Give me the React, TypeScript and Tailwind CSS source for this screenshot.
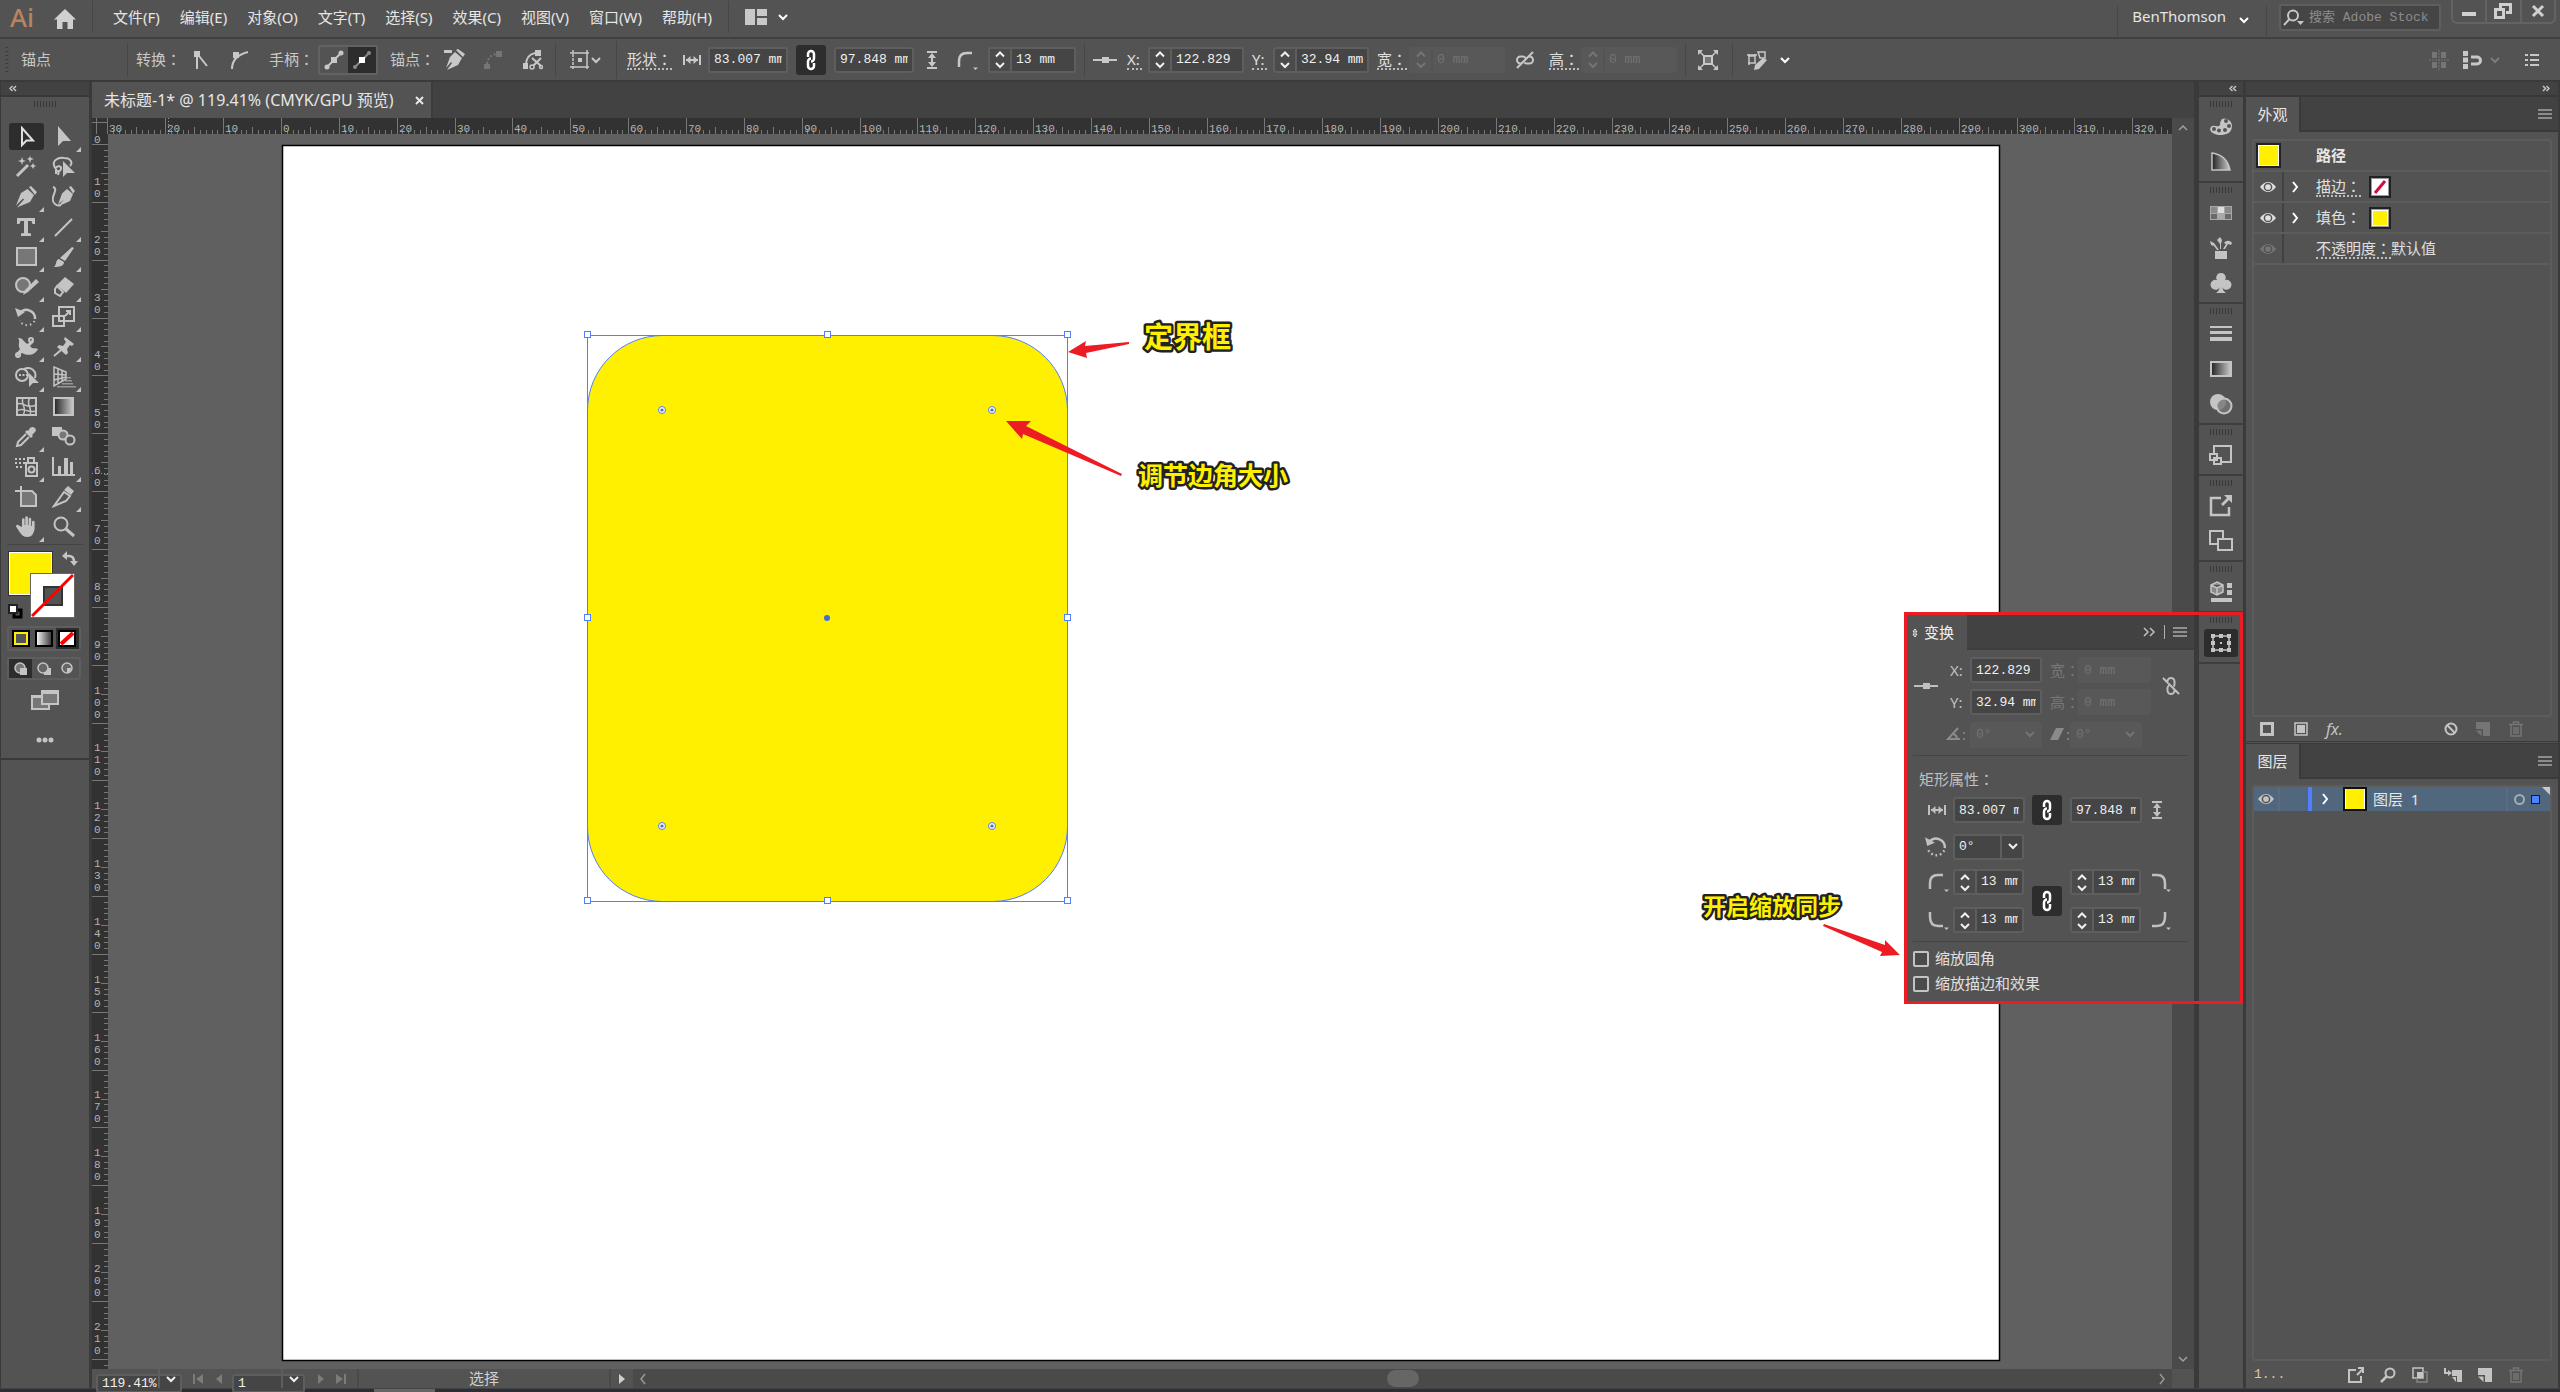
import React from "react";

const SANS = "font-['Noto_Sans','Noto_Sans_CJK_SC',sans-serif]";

type IconProps = { w?: number; h?: number; className?: string; fill?: boolean; sw?: number; children: React.ReactNode };

function Icon({ w = 20, h = 20, className = "", fill = false, sw = 2, children }: IconProps) {
  return (
    <svg
      width={w}
      height={h}
      viewBox={`0 0 ${w} ${h}`}
      className={`shrink-0 ${className}`}
      fill={fill ? "currentColor" : "none"}
      stroke={fill ? "none" : "currentColor"}
      strokeWidth={sw}
      aria-hidden="true"
    >
      {children}
    </svg>
  );
}

const Down = ({ className = "" }: { className?: string }) => (
  <Icon w={12} h={8} className={className}>
    <path d="M2 2l4 4 4-4" />
  </Icon>
);

const LinkIcon = () => (
  <Icon w={14} h={22} sw={2.5}>
    <path d="M4 8V5a3 3 0 0 1 6 0v4.500a3 3 0 0 1-3 3M10 14v3a3 3 0 0 1-6 0v-4.500a3 3 0 0 1 3-3" />
  </Icon>
);

const UnlinkIcon = ({ className = "" }: { className?: string }) => (
  <Icon className={className} sw={2}>
    <path d="M2 2l16 16M6.500 7V5.500a3.500 3.500 0 0 1 7 0V8a3 3 0 0 1-1 2.500M8 9.500a3 3 0 0 0-1.500 2.500v2.500a3.500 3.500 0 0 0 7 0V13" />
  </Icon>
);

const WidthIcon = () => (
  <Icon sw={2}>
    <path d="M2 5v10M18 5v10M4 10h12" />
    <path d="M8.500 6L4 10l4.500 4zM11.500 6l4.500 4-4.500 4z" fill="currentColor" stroke="none" />
  </Icon>
);

const HeightIcon = () => (
  <Icon sw={2}>
    <path d="M5 2h10M5 18h10M10 4v12" />
    <path d="M6 8l4-5 4 5zM6 12l4 5 4-5z" fill="currentColor" stroke="none" />
  </Icon>
);

const RefPoint = () => (
  <Icon w={24} h={20}>
    <path d="M0 10h24" />
    <path d="M9 7h7v6H9z" fill="currentColor" stroke="none" />
  </Icon>
);

function CornerIcon({ turn }: { turn: "tl" | "tr" | "bl" | "br" }) {
  const d = {
    tl: "M3 18V12Q3 4 11 4H16",
    tr: "M3 4H8Q16 4 16 12V18",
    bl: "M3 3V8Q3 17 11 17H16",
    br: "M16 3V8Q16 17 8 17H3",
  }[turn];
  return (
    <Icon w={24} h={22} sw={2.5}>
      <path d={d} />
      <path d="M17 18.500h5l-2.500 2.500z" fill="currentColor" stroke="none" />
    </Icon>
  );
}

const RotateIcon = ({ s = 20 }: { s?: number }) => (
  <svg width={s} height={s} viewBox="0 0 20 20" fill="none" stroke="currentColor" strokeWidth="2.2" aria-hidden="true">
    <path d="M4 6a8 8 0 0 1 14 6" />
    <path d="M0 2l2 8 7-3z" fill="currentColor" stroke="none" />
    <path d="M17.500 14a8 8 0 0 1-14.500-.500" strokeDasharray="1.600 2.400" />
  </svg>
);

const MenuIcon = ({ className = "" }: { className?: string }) => (
  <Icon w={14} h={12} sw={2} className={className}>
    <path d="M0 2h14M0 6h14M0 10h14" />
  </Icon>
);

const EyeIcon = ({ className = "" }: { className?: string }) => (
  <Icon w={16} h={12} className={className}>
    <path d="M0 6Q8-4 16 6Q8 16 0 6z" fill="currentColor" stroke="none" />
    <circle cx="8" cy="6" r="3.600" className="stroke-[#535353]" strokeWidth="1.500" />
  </Icon>
);

const TrashIcon = () => (
  <Icon w={16} h={16} sw={1.500}>
    <path d="M1 3.500h14M5.500 3V1h5v2M3 4v11h10V4M6 6v7M8 6v7M10 6v7" />
  </Icon>
);

const PageIcon = () => (
  <Icon w={14} h={14} fill>
    <path d="M0 0h14v14H7V7H0zM0 8.500h5.500V14z" />
  </Icon>
);

function Grip() {
  return (
    <Icon w={24} h={6} sw={1} className="text-[#383838]">
      <path d="M1.500 0v6M4.500 0v6M7.500 0v6M10.500 0v6M13.500 0v6M16.500 0v6M19.500 0v6M22.500 0v6" />
    </Icon>
  );
}

/* ---------- form controls ---------- */

const field = "border-2 border-[#5e5e5e] bg-[#454545] rounded-[3px]";
const mono = "font-['Liberation_Mono','Noto_Sans_CJK_SC',monospace] text-[13px]";

// Full-width colon, centred in its em box.
const Colon = () => <span className="font-['Noto_Sans_CJK_JP',sans-serif] leading-none" lang="ja">：</span>;

function Field({ label, value, off, className }: { label: string; value: string; off?: boolean; className: string }) {
  return (
    <input
      aria-label={label}
      defaultValue={value}
      disabled={off}
      className={`h-[26px] shrink-0 rounded-[3px] border-2 px-1 outline-none ${mono} ${
        off ? "border-[#585858] bg-[#585858] text-[#747474]" : "border-[#5e5e5e] bg-[#454545] text-[#f0f0f0]"
      } ${className}`}
    />
  );
}

function Spin({ label, value, off, className }: { label: string; value: string; off?: boolean; className: string }) {
  return (
    <div
      className={`flex h-[26px] shrink-0 overflow-hidden rounded-[3px] border-2 ${
        off ? "border-[#585858] bg-[#585858] text-[#747474]" : "border-[#5e5e5e] bg-[#454545] text-[#f0f0f0]"
      } ${className}`}
    >
      <div className={`flex w-[22px] shrink-0 flex-col items-center justify-between border-r-2 ${off ? "border-[#535353]" : "border-[#5e5e5e] bg-[#4b4b4b]"}`}>
        <button aria-label={`${label} +`} disabled={off} className="h-[11px]">
          <Icon w={12} h={8}><path d="M2 6.500l4-4 4 4" /></Icon>
        </button>
        <button aria-label={`${label} -`} disabled={off} className="h-[11px]">
          <Down />
        </button>
      </div>
      <input aria-label={label} defaultValue={value} disabled={off} className={`w-full min-w-0 bg-transparent px-1 outline-none ${mono}`} />
    </div>
  );
}

function Pick({ label, value, off, className, arrow = "" }: { label: string; value: string; off?: boolean; className: string; arrow?: string }) {
  return (
    <div className={`relative shrink-0 ${className}`}>
      <select
        aria-label={label}
        disabled={off}
        className={`h-full w-full appearance-none rounded-[3px] border-2 pl-1 leading-none opacity-100 outline-none ${mono} ${
          off ? "border-[#585858] bg-[#585858] text-[#747474]" : "border-[#5e5e5e] bg-[#454545] text-[#f0f0f0]"
        }`}
      >
        <option>{value}</option>
      </select>
      <span className={`pointer-events-none absolute inset-y-0 right-0 flex w-6 items-center justify-center ${off ? "text-[#747474]" : "text-[#f0f0f0]"} ${arrow}`}>
        <Down />
      </span>
    </div>
  );
}

function IconButton({ label, className = "", children }: { label: string; className?: string; children: React.ReactNode }) {
  return (
    <button aria-label={label} className={`flex shrink-0 items-center justify-center ${className}`}>
      {children}
    </button>
  );
}

const Sep = ({ className = "" }: { className?: string }) => <span className={`h-8 w-px shrink-0 bg-[#464646] ${className}`} />;

const Dotted = ({ children, className = "" }: { children: React.ReactNode; className?: string }) => (
  <button className={`shrink-0 border-b-2 border-dotted border-[#bdbdbd] text-left leading-[18px] whitespace-nowrap text-[#e0e0e0] ${className}`}>{children}</button>
);

/* ---------- top bars ---------- */

const menus = ["文件(F)", "编辑(E)", "对象(O)", "文字(T)", "选择(S)", "效果(C)", "视图(V)", "窗口(W)", "帮助(H)"];

function MenuBar() {
  return (
    <header className="flex h-[39px] shrink-0 border-b-2 border-[#404040] text-[#e6e6e6]">
      <div className="flex items-center pb-[3px]">
        <span className="ml-2.5 w-6 font-['Noto_Sans',sans-serif] text-[26px] leading-8 font-medium text-[#b98360]">Ai</span>
        <IconButton label="主页" className="ml-5 pt-1 text-[#d0d0d0]">
          <Icon w={22} h={20} fill><path d="M11 0l11 10.500h-3V20h-5.500v-7h-5v7H3v-9.500H0z" /></Icon>
        </IconButton>
        <Sep className="ml-4 h-6" />
        <nav className="ml-5 flex gap-5 text-[15px]">
          {menus.map((m) => (
            <button key={m} className="whitespace-nowrap">{m}</button>
          ))}
        </nav>
        <Sep className="ml-4 h-6" />
        <IconButton label="排列文档" className="ml-4 gap-2.5 text-[#c8c8c8]">
          <Icon w={22} h={16} fill><path d="M0 0h10v16H0zM12 0h10v7H12zM12 9h10v7H12z" /></Icon>
          <Down className="text-white" />
        </IconButton>
      </div>
      <div className="ml-auto flex items-start">
        <Sep className="mt-1.5 h-6" />
        <button className="mt-1.5 ml-3.5 flex items-center gap-3 text-[15px] leading-5">
          BenThomson <Down className="mt-2 text-white" />
        </button>
        <Sep className="mt-1.5 ml-4 h-6" />
        <label className={`mt-1 ml-3 flex h-[27px] w-[162px] items-center ${field} text-[#c8c8c8]`}>
          <Icon w={26} h={20}>
            <circle cx="12" cy="7.500" r="5" />
            <path d="M8.500 11L3 17" />
            <path d="M16 13h7l-3.500 4z" fill="currentColor" stroke="none" />
          </Icon>
          <input aria-label="搜索 Adobe Stock" placeholder="搜索 Adobe Stock" className={`w-full min-w-0 bg-transparent pl-0.5 outline-none placeholder:text-[#8c8c8c] ${mono}`} />
        </label>
        <div className="mr-1 ml-2.5 flex h-6 w-[105px] rounded-b-md border-2 border-t-0 border-[#636363] text-[#d0d0d0]">
          <IconButton label="最小化" className="flex-1 border-r-2 border-[#636363]"><Icon w={14} h={14} fill><path d="M0 8h14v4H0z" /></Icon></IconButton>
          <IconButton label="还原" className="flex-1 border-r-2 border-[#636363]"><Icon w={18} h={16} sw={3}><path d="M6.500 5V1.500h10v8H12" /><path d="M1.500 6.500h8v8h-8z" /></Icon></IconButton>
          <IconButton label="关闭" className="flex-1"><Icon w={14} h={14} sw={3}><path d="M2 2l10 10M12 2L2 12" /></Icon></IconButton>
        </div>
      </div>
    </header>
  );
}

function ControlBar() {
  return (
    <div className="flex h-[43px] shrink-0 items-center border-b-2 border-[#3a3a3a] text-[15px] whitespace-nowrap text-[#c8c8c8]">
      <Icon w={4} h={26} sw={3} className="ml-[5px] text-[#3c3c3c]"><path d="M2 0v26" strokeDasharray="1 3" /></Icon>
      <span className="ml-3 w-[30px]">锚点</span>
      <Sep className="ml-[76px]" />
      <span className="ml-2 w-[45px]">转换<Colon /></span>
      <IconButton label="转换为尖角" className="ml-2"><Icon><path d="M5 1h6v6H5z" fill="currentColor" stroke="none" /><path d="M8 6v13M10 6l8 10" /></Icon></IconButton>
      <IconButton label="转换为平滑" className="ml-5"><Icon><path d="M3 19Q3 6 19 2" /><path d="M4 2h6v6H4z" fill="currentColor" stroke="none" /></Icon></IconButton>
      <span className="ml-5 w-[45px]">手柄<Colon /></span>
      <div className="ml-1 flex rounded-[3px] border-2 border-[#626262]">
        <IconButton label="显示手柄" className="h-[26px] w-7"><Icon><path d="M3 17L17 3" /><path d="M7 7h6v6H7z" fill="currentColor" stroke="none" /><circle cx="3" cy="17" r="2.500" fill="currentColor" stroke="none" /><circle cx="17" cy="3" r="2.500" fill="currentColor" stroke="none" /></Icon></IconButton>
        <IconButton label="隐藏手柄" className="h-[26px] w-7 bg-[#2d2d2d]"><Icon className="text-[#8a8a8a]"><path d="M3 17L17 3" /><circle cx="3" cy="17" r="2" fill="currentColor" stroke="none" /><circle cx="17" cy="3" r="2" fill="currentColor" stroke="none" /><path d="M7 7h6v6H7z" fill="#fff" stroke="none" /></Icon></IconButton>
      </div>
      <span className="ml-3 w-[45px]">锚点<Colon /></span>
      <IconButton label="删除锚点" className="ml-2"><Icon w={24} h={22} fill><path d="M1 1h8v3H1zM13 1l2-1 7 5-2 3zM12 3l7 6-4 7-11 5 5-7-1-1-5 6 4-11z" /></Icon></IconButton>
      <IconButton label="连接端点" className="ml-4 text-[#757575]"><Icon><path d="M4 14Q5 5 14 4" strokeDasharray="2 2" /><path d="M1 14h6v5H1zM13 1h6v6h-6z" fill="currentColor" stroke="none" /></Icon></IconButton>
      <IconButton label="剪切路径" className="ml-5"><Icon><path d="M3 15Q3 5 12 3M9 8l9 8M18 8l-8 8" /><path d="M12 0h6v6h-6zM0 13h5v6H0z" fill="currentColor" stroke="none" /><circle cx="9" cy="17" r="2" strokeWidth="1.500" /><circle cx="18" cy="17" r="1.500" strokeWidth="1.500" /></Icon></IconButton>
      <Sep className="ml-3" />
      <IconButton label="对齐" className="ml-3.5"><Icon><path d="M3 3h14v14H3zM0 3h20M0 17h20M3 0v20M17 0v20" strokeWidth="1.500" strokeDasharray="3 1" /><path d="M8 8h4v4H8z" fill="currentColor" stroke="none" /></Icon><Down /></IconButton>
      <Sep className="ml-3.5 h-[38px]" />
      <Dotted className="ml-2.5 w-[45px]">形状<Colon /></Dotted>
      <span className="ml-2.5"><WidthIcon /></span>
      <Field label="形状宽度" value="83.007 mm" className="ml-1.5 w-20" />
      <IconButton label="约束宽度和高度" className="ml-2 h-[30px] w-[30px] rounded-[3px] bg-[#2d2d2d] text-white"><LinkIcon /></IconButton>
      <Field label="形状高度" value="97.848 mm" className="ml-2 w-20" />
      <span className="ml-2"><HeightIcon /></span>
      <IconButton label="圆角类型" className="ml-3.5"><CornerIcon turn="tl" /></IconButton>
      <Spin label="圆角半径" value="13 mm" className="ml-2 w-[88px]" />
      <Sep className="ml-2" />
      <IconButton label="参考点" className="ml-2"><RefPoint /></IconButton>
      <Dotted className="ml-2.5 w-[15px]">X:</Dotted>
      <Spin label="X 坐标" value="122.829" className="ml-1.5 w-24" />
      <Dotted className="ml-2 w-[15px]">Y:</Dotted>
      <Spin label="Y 坐标" value="32.94 mm" className="ml-1.5 w-24" />
      <Dotted className="ml-2 w-[30px]">宽<Colon /></Dotted>
      <Spin label="宽" value="0 mm" off className="ml-0.5 w-24" />
      <IconButton label="链接宽高" className="ml-2.5"><UnlinkIcon className="rotate-90" /></IconButton>
      <Dotted className="ml-3.5 w-[30px]">高<Colon /></Dotted>
      <Spin label="高" value="0 mm" off className="ml-0.5 w-24" />
      <Sep className="ml-2" />
      <IconButton label="隔离" className="ml-3"><Icon><path d="M6 6h8v8H6z" fill="#777" /><path d="M1 1l5 5M19 1l-5 5M1 19l5-5M19 19l-5-5" strokeWidth="1.500" /><path d="M0 0h5L0 5zM20 0h-5l5 5zM0 20h5l-5-5zM20 20h-5l5-5z" fill="currentColor" stroke="none" /></Icon></IconButton>
      <Sep className="ml-3.5" />
      <IconButton label="选择类似" className="ml-3.5 gap-3"><Icon><path d="M2 6h6v7H2zM11 2h7v6h-5zM0 5h10M1 13h8M2 4v11M8 4v9" strokeWidth="1.500" /><path d="M16 8l4 2-8 9-5 1 1-5z" fill="currentColor" stroke="none" /></Icon><Down className="text-white" /></IconButton>
      <div className="mr-[21px] ml-auto flex items-center">
        <IconButton label="对齐网格" className="text-[#757575]"><Icon><path d="M3 2h5v6H3zM12 2h5v6h-5zM3 12h5v6H3zM12 12h5v6h-5z" fill="currentColor" stroke="none" /><path d="M0 10h20M10 0v20" strokeWidth="1" strokeDasharray="2 1" /></Icon></IconButton>
        <IconButton label="贴紧" className="ml-3 gap-1.5"><Icon w={22}><path d="M2 1h5v5H2zM2 7.500h5v5H2zM2 14h5v5H2z" fill="currentColor" stroke="none" /><path d="M10 7h6a3.500 3.500 0 0 1 0 7h-6" strokeWidth="3" /></Icon><Down className="text-[#7c7c7c]" /></IconButton>
        <IconButton label="控制栏菜单" className="ml-6"><Icon w={14} h={14}><path d="M0 2h3M5 2h9M0 7h3M5 7h9M0 12h3M5 12h9" /></Icon></IconButton>
      </div>
    </div>
  );
}

/* ---------- tool box ---------- */

const tools: { name: string; more?: boolean; art: React.ReactNode }[] = [
  { name: "选择工具", art: <path d="M7 2v17l4.500-4.500H18z" /> },
  { name: "直接选择工具", more: true, art: <path d="M6 0v20l5-5h8z" fill="currentColor" stroke="none" /> },
  { name: "魔棒工具", art: <><path d="M2 20L13 9" strokeWidth="3" /><path d="M7 1l1 3 3 1-3 1-1 3-1-3-3-1 3-1zM15 0l1 2 3 1-3 1-1 3-1-3-2-1 2-1zM18 7l1 2 2 1-2 1-1 2-1-2-2-1 2-1z" fill="currentColor" stroke="none" /></> },
  { name: "套索工具", art: <><path d="M4 13C-3 4 8 1 12 2c7 0 9 5 6 8M4 12c1-3 6-2 5 1s-5 3-5 0v5M7 15l-1 4" /><path d="M11 5v16l4-4h8z" fill="currentColor" stroke="none" /></> },
  { name: "钢笔工具", more: true, art: <path d="M14 1l2-1 6 6-2 3zM12.500 3l6.500 6-4 7-13 5.500 7-8-1-1-7 7 5-12.500z" fill="currentColor" stroke="none" /> },
  { name: "曲率工具", art: <><path d="M1 1c6 2-2 9 0 14s5 5 8 4" /><path d="M17 1l2-1 4 5-2 2.500zM15 3l6 5-3 7-12 5.500 6-7-6 5 4-11z" fill="currentColor" stroke="none" /></> },
  { name: "文字工具", more: true, art: <path d="M2 2h18v6h-2.500l-1-3H13v12l3 .500V20H6v-2.500L9 17V5H5.500l-1 3H2z" fill="currentColor" stroke="none" /> },
  { name: "直线段工具", more: true, art: <path d="M3 20L20 3" /> },
  { name: "矩形工具", more: true, art: <path d="M2 2h19v17H2z" fill="#777" /> },
  { name: "画笔工具", more: true, art: <path d="M20 1l2 1-9 13-5-3zM7 13l5 3c0 4-4 5-10 5 3-2 1-7 5-8z" fill="currentColor" stroke="none" /> },
  { name: "Shaper 工具", more: true, art: <><circle cx="8" cy="9" r="7" fill="#777" /><path d="M21 3l3 3-11 10-5 3 2-5z" fill="currentColor" stroke="none" /></> },
  { name: "橡皮擦工具", more: true, art: <><path d="M13 1l9 7-8 9-9-8z" fill="currentColor" stroke="none" /><path d="M5 10l6 6-3 4-5-3v-4z" /></> },
  { name: "旋转工具", more: true, art: <><path d="M5 7a8.500 8.500 0 0 1 15 6" strokeWidth="2.500" /><path d="M0 2l3 9 7-5z" fill="currentColor" stroke="none" /><path d="M19.500 15a8.500 8.500 0 0 1-15-.500" strokeDasharray="1.500 3" /></> },
  { name: "比例缩放工具", more: true, art: <><path d="M7 1h15v14H7zM1 10h11v10H1z" /><path d="M13 10l5-5M14 5h4v4" /></> },
  { name: "宽度工具", more: true, art: <><path d="M2 19L17 5" strokeWidth="1.500" /><path d="M3 2c5-1 6 5 10 6l4-4 2 2-4 4c3 4 5 1 8 3-2 5-9 8-16 4l-4 3-2-2 4-5C2 9 6 5 3 2z" fill="currentColor" stroke="none" /><circle cx="3" cy="19" r="2" /><circle cx="16" cy="4" r="2" /></> },
  { name: "操控变形工具", more: true, art: <><path d="M13 1l9 7-2 2-2-1-3 4 1 4-2 2L5 11l2-2 4 1 3-4-2-3z" fill="currentColor" stroke="none" /><path d="M9 14l-7 6" /></> },
  { name: "形状生成器工具", more: true, art: <><circle cx="7" cy="9" r="6" /><path d="M9 3c7-3 13 2 11 9" /><path d="M4 9h9" strokeDasharray="2 1.500" /><path d="M14 7v14l4-4h6z" fill="currentColor" stroke="none" /></> },
  { name: "透视网格工具", more: true, art: <><path d="M2 1v19l12-7V6zM6 3v14M10 5v10M2 8l12 1M2 14l12-3" strokeWidth="1.500" /><path d="M15 11h4v1.500h-4zM13 14h7v1.500h-7zM10 17h11v1.500H10zM5 20h19v1.500H5z" fill="#999" stroke="none" /></> },
  { name: "网格工具", art: <><path d="M2 2h19v17H2z" /><path d="M2 8c6-3 10 6 19 1M2 15c7-5 10 3 19 0M8 2c-3 6 5 10 0 17M15 2c-5 6 3 10 0 17" strokeWidth="1.500" /></> },
  { name: "渐变工具", art: <rect x="2" y="2" width="19" height="17" fill="url(#tool-grad)" /> },
  { name: "吸管工具", more: true, art: <><path d="M15 2c3-3 8 1 5 4l-3 3 1 1-2 2-6-6 2-2 1 1z" fill="currentColor" stroke="none" /><path d="M11 8L3 16l-1 4 4-1 8-8" /></> },
  { name: "混合工具", art: <><path d="M0 1h10v9H0z" fill="currentColor" stroke="none" /><circle cx="11" cy="9" r="4.500" fill="#777" /><circle cx="18" cy="14" r="4.500" fill="#535353" /></> },
  { name: "符号喷枪工具", more: true, art: <><path d="M11 7h11v13H11zM13 6V2h6v4" /><circle cx="16.500" cy="13.500" r="3" /><path d="M0 3h10M0 7h10M1 11h6" strokeDasharray="2 2" /></> },
  { name: "柱形图工具", more: true, art: <><path d="M1 1v18h22" /><path d="M6 10h3v8H6zM12 2h4v16h-4zM18 6h3v12h-3z" fill="currentColor" stroke="none" /></> },
  { name: "画板工具", art: <><path d="M6 5h11l4 4v11H6z" fill="#777" /><path d="M6 0v8M0 5h8" /></> },
  { name: "切片工具", more: true, art: <><path d="M16 0l6 5-3 4-7-5z" fill="currentColor" stroke="none" /><path d="M12 6l6 4-4 5-12 5z" /></> },
  { name: "抓手工具", more: true, art: <path d="M7 11V3.500a1.300 1.300 0 0 1 2.600 0V9h.7V1.500a1.300 1.300 0 0 1 2.600 0V9h.7V3a1.300 1.300 0 0 1 2.600 0v7h.8V6a1.300 1.300 0 0 1 2.600 0V13c-1 5-3 8-7 8-4 0-6-2-8-5L1 10.500c0-2 2-2 3-1z" fill="currentColor" stroke="none" /> },
  { name: "缩放工具", art: <><circle cx="9" cy="8" r="6.500" /><path d="M14 13l8 7" strokeWidth="3" /></> },
];

function ToolBox() {
  return (
    <aside className="flex w-[92px] shrink-0 flex-col border-r-[3px] border-l border-[#3a3a3a] text-[#c4c4c4]">
      <div className="flex h-[15px] items-center border-b-2 border-[#383838] bg-[#424242] pl-2">
        <Icon w={8} h={7} sw={1.500}><path d="M3.500 1L1 3.500 3.500 6M7 1L4.500 3.500 7 6" /></Icon>
      </div>
      <div className="flex h-[26px] justify-center pt-1"><Grip /></div>
      <svg width="0" height="0" className="absolute" aria-hidden="true">
        <defs>
          <linearGradient id="tool-grad"><stop offset="0" stopColor="#222" /><stop offset="1" stopColor="#ccc" /></linearGradient>
          <linearGradient id="white-grad"><stop offset="0" stopColor="#fff" /><stop offset="1" stopColor="#333" /></linearGradient>
        </defs>
      </svg>
      <div className="ml-2 grid w-[72px] grid-cols-2 gap-x-0.5 gap-y-[3px]">
        {tools.map((t, i) => (
          <button key={t.name} aria-label={t.name} className={`relative flex h-[27px] items-center justify-center rounded-[3px] ${i === 0 ? "bg-[#2d2d2d]" : ""}`}>
            <Icon w={24} h={22} className={i === 0 ? "text-[#e0e0e0]" : ""}>{t.art}</Icon>
            {t.more && <Icon w={5} h={5} fill className="absolute right-0 -bottom-0.5"><path d="M5 0v5H0z" /></Icon>}
          </button>
        ))}
      </div>
      <div className="mx-1.5 mt-1 h-px bg-[#444]" />
      <div className="relative mt-1.5 ml-[7px] h-[68px] w-[72px]">
        <button aria-label="填色" className="absolute top-0 left-0 size-[45px] border border-[#333] bg-[#fff000] shadow-[inset_0_0_0_1px_#fff]" />
        <button aria-label="描边" className="absolute top-[22px] left-[22px] size-[45px] border border-[#666] bg-white">
          <svg viewBox="0 0 43 43" className="size-full" aria-hidden="true">
            <rect x="13" y="13" width="18" height="18" fill="#535353" stroke="#333" strokeWidth="2" />
            <path d="M1 42L42 1" stroke="#f00" strokeWidth="3" />
          </svg>
        </button>
        <button aria-label="互换填色和描边" className="absolute top-0 right-0.5"><Icon w={16} h={16}><path d="M4 5h3q5 0 5 6" strokeWidth="2.500" /><path d="M5 0v9L0 5zM8 10h8l-4 5z" fill="currentColor" stroke="none" /></Icon></button>
        <button aria-label="默认填色和描边" className="absolute bottom-0 left-0"><Icon w={15} h={15}><path d="M6 6h7v7H6z" stroke="#000" strokeWidth="3" /><path d="M1 1h8v8H1z" fill="#fff" stroke="#222" /></Icon></button>
      </div>
      <div className="mt-[7px] ml-1.5 flex w-[74px] rounded-[3px] border-2 border-[#5e5e5e]">
        <IconButton label="颜色" className="h-[21px] flex-1"><Icon w={18} h={17}><rect x="1" y="1" width="16" height="15" fill="#555" stroke="#000" /><rect x="3" y="3" width="12" height="11" stroke="#fff000" /></Icon></IconButton>
        <IconButton label="渐变" className="h-[21px] flex-1"><Icon w={18} h={17}><rect x="1" y="1" width="16" height="15" fill="url(#white-grad)" stroke="#000" /></Icon></IconButton>
        <IconButton label="无" className="h-[21px] flex-1 bg-[#2d2d2d]"><Icon w={18} h={17}><rect x="1" y="1" width="16" height="15" fill="#fff" stroke="#000" /><path d="M3 14L15 3" stroke="#f00" strokeWidth="4" /></Icon></IconButton>
      </div>
      <div className="mt-1.5 ml-1.5 flex w-[74px] rounded-[3px] border-2 border-[#5e5e5e]">
        <IconButton label="正常绘图" className="h-[19px] flex-1 bg-[#2d2d2d]"><Icon w={16} h={14} sw={1.500}><circle cx="7" cy="6" r="5" fill="#777" /><path d="M7 6h7v7H7z" fill="currentColor" stroke="none" /></Icon></IconButton>
        <IconButton label="背面绘图" className="h-[19px] flex-1"><Icon w={16} h={14} sw={1.500}><path d="M8 6h7v7H8z" fill="currentColor" stroke="none" /><circle cx="7" cy="6" r="5" fill="#666" /></Icon></IconButton>
        <IconButton label="内部绘图" className="h-[19px] flex-1"><Icon w={16} h={14} sw={1.500}><circle cx="8" cy="6" r="5" fill="#666" /><path d="M8 6h4v1q-1 4-4 4z" fill="currentColor" stroke="none" /></Icon></IconButton>
      </div>
      <IconButton label="更改屏幕模式" className="mt-2.5"><Icon w={28} h={20}><path d="M11 6H1v13h17v-5" fill="#777" /><path d="M11 1h16v13H11z" fill="#777" /><path d="M11 3h16M1 7h10" /></Icon></IconButton>
      <IconButton label="编辑工具栏" className="mt-[27px]"><Icon w={18} h={6} fill><circle cx="3" cy="3" r="2.500" /><circle cx="9" cy="3" r="2.500" /><circle cx="15" cy="3" r="2.500" /></Icon></IconButton>
      <div className="mt-[15px] h-0.5 bg-[#3a3a3a]" />
    </aside>
  );
}

/* ---------- rulers and canvas ---------- */

const PX_PER_MM = 5.785;

function HorizontalRuler() {
  const origin = 174;
  const ticks = Array.from({ length: 357 }, (_, i) => i - 30);
  return (
    <svg className="h-4 min-w-0 flex-1 bg-[#323232]" aria-hidden="true">
      <path d={ticks.map((t) => `M${Math.round(origin + t * PX_PER_MM) - 0.5} 16v-${t % 10 === 0 ? 16 : t % 5 === 0 ? 7 : 4}`).join("")} stroke="#777" strokeWidth="1" />
      <path d="M60.500 0v16" stroke="#999" strokeDasharray="1 2" />
      {ticks.filter((t) => t % 10 === 0).map((t) => (
        <text key={t} x={Math.round(origin + t * PX_PER_MM) + 1} y="14" fill="#b4b4b4" className="font-['Liberation_Mono',monospace] text-[11px]">{Math.abs(t)}</text>
      ))}
    </svg>
  );
}

function VerticalRuler() {
  const origin = 11;
  const ticks = Array.from({ length: 214 }, (_, i) => i);
  return (
    <svg className="w-4 shrink-0 bg-[#323232]" aria-hidden="true">
      <path d={ticks.map((t) => `M16 ${Math.round(origin + t * PX_PER_MM) - 0.5}h-${t % 10 === 0 ? 16 : t % 5 === 0 ? 7 : 4}`).join("")} stroke="#777" strokeWidth="1" />
      <path d="M0 339.500h16" stroke="#999" strokeDasharray="1 2" />
      {ticks.filter((t) => t % 10 === 0).map((t) =>
        String(t).split("").reverse().map((d, k) => (
          <text key={`${t}-${k}`} x="2" y={Math.max(9, Math.round(origin + t * PX_PER_MM) - 6 - k * 12)} fill="#b4b4b4" className="font-['Liberation_Mono',monospace] text-[11px]">{d}</text>
        ))
      )}
    </svg>
  );
}

const handles = [[588, 335], [828, 335], [1068, 335], [588, 618], [1068, 618], [588, 901], [828, 901], [1068, 901]];
const cornerDots = [[662, 410], [992, 410], [662, 826], [992, 826]];

function Canvas() {
  return (
    <div className="min-w-0 flex-1 overflow-hidden bg-[#606060]">
      <svg className="block size-full font-['Noto_Sans_CJK_SC',sans-serif] font-bold">
        <g transform="translate(-108 -134)">
          <rect x="282.500" y="145.500" width="1717" height="1215" fill="#fff" stroke="#000" strokeWidth="1.500" />
          <rect x="587.500" y="335.500" width="480" height="566" rx="75" fill="#fff000" stroke="#4f80ff" />
          <rect x="587.500" y="335.500" width="480" height="566" fill="none" stroke="#4f80ff" />
          {handles.map(([x, y]) => <rect key={`${x}-${y}`} x={x - 3.5} y={y - 3.5} width="6" height="6" fill="#fff" stroke="#4f80ff" />)}
          {cornerDots.map(([x, y]) => (
            <g key={`${x}-${y}`}>
              <circle cx={x} cy={y} r="3.500" fill="#fffbd0" stroke="#4f80ff" />
              <circle cx={x} cy={y} r="1.600" fill="#3f70e8" />
            </g>
          ))}
          <circle cx="827" cy="618" r="3" fill="#3f6fd0" />
          <g fill="#ed1c24">
            <path d="M1068 352L1086 341 1085 346 1129 342 1129 344 1086 353 1087 358z" />
            <path d="M1006 421H1031L1026 426 1122 474 1121 476 1023 434 1022 439z" />
            <path d="M1900 955L1885 940 1885 945 1824 924 1823 926 1882 952 1880 956z" />
          </g>
          <g fill="#fff000" stroke="#222" strokeWidth="5" strokeLinejoin="round" className="[paint-order:stroke]">
            <text x="1144" y="348" className="text-[29px]">定界框</text>
            <text x="1138" y="485" className="text-[25px]">调节边角大小</text>
            <text x="1703" y="915" className="text-[23px]">开启缩放同步</text>
          </g>
        </g>
      </svg>
    </div>
  );
}

function StatusBar() {
  return (
    <footer className="flex h-[19px] shrink-0 items-center text-[#7c7c7c]">
      <Pick label="缩放" value="119.41%" className="ml-1 h-[19px] w-[86px]" arrow="border-l-2 border-[#5e5e5e]" />
      <IconButton label="首项" className="ml-2.5"><Icon w={12} h={10} fill><path d="M1 0h2v10H1zM11 0v10L4 5z" /></Icon></IconButton>
      <IconButton label="上一项" className="ml-2.5"><Icon w={12} h={10} fill><path d="M8 0v10L2 5z" /></Icon></IconButton>
      <Pick label="画板" value="1" className="ml-1.5 h-[19px] w-[73px]" arrow="border-l-2 border-[#5e5e5e]" />
      <IconButton label="下一项" className="ml-2.5"><Icon w={12} h={10} fill><path d="M3 0v10L9 5z" /></Icon></IconButton>
      <IconButton label="末项" className="ml-2"><Icon w={12} h={10} fill><path d="M9 0h2v10H9zM1 0v10L8 5z" /></Icon></IconButton>
      <div className="ml-2.5 w-[254px] border-x-2 border-[#4a4a4a] text-center text-[15px] leading-[19px] text-[#d0d0d0]">选择</div>
      <IconButton label="状态菜单" className="mx-1.5 text-[#d0d0d0]"><Icon w={10} h={10} fill><path d="M2 0v10l6-5z" /></Icon></IconButton>
      <div className="flex h-full flex-1 items-center justify-between bg-[#4a4a4a] pr-1.5 pl-1.5 text-[#999]">
        <Icon w={8} h={12} sw={1.500}><path d="M6 1L2 6l4 5" /></Icon>
        <span className="h-[17px] w-8 rounded-full bg-[#666]" />
        <Icon w={8} h={12} sw={1.500}><path d="M2 1l4 5-4 5" /></Icon>
      </div>
      <span className="w-[22px] shrink-0" />
    </footer>
  );
}

function Document() {
  return (
    <main className="flex min-w-0 flex-1 flex-col">
      <div className="flex h-9 shrink-0 bg-[#424242]">
        <div className={`flex w-[341px] items-center justify-between border-r-2 border-[#3c3c3c] bg-[#535353] pr-1 pl-3 text-[#e6e6e6] ${SANS}`}>
          <span className="text-base whitespace-nowrap">未标题-1* @ 119.41% (CMYK/GPU 预览)</span>
          <button aria-label="关闭文档" className="flex w-4 justify-center"><Icon w={9} h={9}><path d="M1 1l7 7M8 1L1 8" /></Icon></button>
        </div>
      </div>
      <div className="flex min-h-0 flex-1">
        <div className="flex min-w-0 flex-1 flex-col">
          <div className="flex h-4 shrink-0">
            <Icon w={16} h={16} sw={1} className="bg-[#323232] text-[#777]"><path d="M4.500 0v16M0 4.500h16M15.500 0v16" /></Icon>
            <HorizontalRuler />
          </div>
          <div className="flex min-h-0 flex-1">
            <VerticalRuler />
            <Canvas />
          </div>
        </div>
        <div className="flex w-[22px] shrink-0 flex-col items-center justify-between bg-[#4a4a4a] py-1.5 text-[#a0a0a0]">
          <Icon w={12} h={8} sw={1.500}><path d="M2 6l4-4 4 4" /></Icon>
          <Icon w={12} h={8} sw={1.500}><path d="M2 2l4 4 4-4" /></Icon>
        </div>
      </div>
      <StatusBar />
    </main>
  );
}

/* ---------- icon dock ---------- */

const dock: { name: string; art: React.ReactNode }[][] = [
  [
    { name: "颜色", art: <path fillRule="evenodd" d="M12 5C13 0 23 3 23 10s-6 9-12 9S-1 15 2 11c2-3 7 1 9-2 1-2-1-2 1-4zM15 5a2 2 0 1 0 4 0 2 2 0 0 0-4 0zM18 10a2 2 0 1 0 4 0 2 2 0 0 0-4 0zM14 14a2 2 0 1 0 4 0 2 2 0 0 0-4 0zM8 14.500a2 2 0 1 0 4 0 2 2 0 0 0-4 0zM3 13a2 2 0 1 0 4 0 2 2 0 0 0-4 0z" fill="currentColor" stroke="none" /> },
    { name: "颜色参考", art: <path d="M3 2q15 2 18 17H3z" fill="url(#tool-grad)" strokeWidth="1.500" /> },
  ],
  [
    { name: "色板", art: <><path d="M1 4h22v14H1z" fill="#a8a8a8" stroke="none" /><path d="M2 5h6v6H2zM16 5h6v6h-6z" fill="#8a8a8a" stroke="none" /><path d="M9 5h6v6H9z" fill="#ddd" stroke="none" /><path d="M2 12h6v5H2zM16 12h6v5h-6z" fill="#6a6a6a" stroke="none" /></> },
    { name: "画笔", art: <path d="M6 14h12v8H6zM8 13L5 9 2 8 1 4l4 2 5 7zM11 12V7L8 3l3-3 2 3-1 4v5zM14 12l3-5-2-1c2-3 6-3 8 0l-1 2-3-1-3 5z" fill="currentColor" stroke="none" /> },
    { name: "符号", art: <path d="M12 1a4.500 4.500 0 0 1 4 7 5 5 0 1 1-3 7q1 4 4 6H7q3-2 4-6a5 5 0 1 1-3-7 4.500 4.500 0 0 1 4-7z" fill="currentColor" stroke="none" /> },
  ],
  [
    { name: "描边", art: <path d="M1 3h22v2H1zM1 8h22v3H1zM1 14h22v4H1z" fill="currentColor" stroke="none" /> },
    { name: "渐变", art: <rect x="2" y="4" width="20" height="14" fill="url(#tool-grad)" /> },
    { name: "透明度", art: <><circle cx="9" cy="9" r="8" fill="currentColor" stroke="none" /><circle cx="15" cy="13" r="7.500" fill="#777" fillOpacity=".8" /></> },
  ],
  [{ name: "变换对象", art: <><path d="M5 9V2h17v16H12" /><path d="M1 10h7v6H1zM5 14h7v6H5z" /></> }],
  [
    { name: "资源导出", art: <><path d="M12 3H2v17h18V12" strokeWidth="2.500" /><path d="M15 0h8v8l-3-3-6 6-2-2 6-6z" fill="currentColor" stroke="none" /></> },
    { name: "画板", art: <><path d="M8 14H1V1h13v7" /><path d="M9 9h14v11H9z" /></> },
  ],
  [{ name: "库", art: <><path d="M8 1l6 3v7l-6 3-6-3V4zM2 4l6 3 6-3M8 7v7" strokeWidth="1.500" fill="#888" /><path d="M18 2h5v5h-5zM18 9h5v5h-5zM2 17h21v4H2z" fill="currentColor" stroke="none" /></> }],
  [{ name: "变换", art: <><path d="M4 4h16v14H4z" strokeWidth="1.500" /><path d="M2 2h4v4H2zM10 2h4v4h-4zM18 2h4v4h-4zM2 9h4v4H2zM18 9h4v4h-4zM2 16h4v4H2zM10 16h4v4h-4zM18 16h4v4h-4zM11 10h2v2h-2z" fill="currentColor" stroke="none" /></> }],
];

function Dock() {
  return (
    <aside className="flex w-[50px] shrink-0 flex-col border-x-[3px] border-[#3a3a3a] text-[#c4c4c4]">
      <div className="flex h-[15px] items-center justify-end border-b-2 border-[#383838] bg-[#424242] pr-1.5">
        <Icon w={8} h={7} sw={1.500}><path d="M3.500 1L1 3.500 3.500 6M7 1L4.500 3.500 7 6" /></Icon>
      </div>
      {dock.map((group) => (
        <div key={group[0].name} className="flex flex-col items-center border-b-2 border-[#3e3e3e] pt-1 pb-0.5">
          <Grip />
          <div className="mt-0.5 flex flex-col">
            {group.map((d) => (
              <button key={d.name} aria-label={d.name} className="flex h-[35px] w-9 items-center justify-center">
                <span className={`flex h-7 w-[34px] items-center justify-center rounded-[3px] ${d.name === "变换" ? "bg-[#2d2d2d]" : ""}`}>
                  <Icon w={24} h={22}>{d.art}</Icon>
                </span>
              </button>
            ))}
          </div>
        </div>
      ))}
    </aside>
  );
}

/* ---------- transform panel ---------- */

const darkLink = "size-[30px] rounded-[3px] bg-[#2d2d2d] text-white";

function TransformPanel() {
  return (
    <section aria-label="变换" className="absolute top-[530px] right-[317px] w-[339px] border-[3px] border-[#ed1c24]">
      <div className="flex w-[289px] flex-col border-r-2 border-[#3a3a3a] bg-[#535353] pb-[5px] text-[15px] whitespace-nowrap text-[#c0c0c0]">
        <div className="flex h-[35px] border-b-2 border-[#3e3e3e] bg-[#424242]">
          <h2 className="-mb-0.5 flex w-[60px] items-center gap-1.5 bg-[#535353] pl-[5px] text-[#f0f0f0]">
            <Icon w={6} h={10} sw={1}><path d="M1 4l2-3 2 3zM1 6l2 3 2-3z" /></Icon>变换
          </h2>
          <div className="mr-[7px] ml-auto flex items-center gap-2">
            <IconButton label="折叠"><Icon w={13} h={10} sw={1.500}><path d="M1 1l4 4-4 4M7 1l4 4-4 4" /></Icon></IconButton>
            <span className="h-3.5 w-px bg-[#b0b0b0]" />
            <MenuIcon className="text-[#909090]" />
          </div>
        </div>
        <div className="mt-[7px] flex items-center pl-[7px]">
          <IconButton label="参考点" className="-mt-8"><RefPoint /></IconButton>
          <div className="ml-3 grid grid-cols-[20px_80px_28px_73px] items-center gap-y-1.5">
            <span>X:</span><Field label="X" value="122.829" className="w-[72px]" />
            <span className="text-[#777]">宽<Colon /></span><Field label="宽度" value="0 mm" off className="w-[73px]" />
            <span>Y:</span><Field label="Y" value="32.94 mm" className="w-[72px]" />
            <span className="text-[#777]">高<Colon /></span><Field label="高度" value="0 mm" off className="w-[73px]" />
            <span className="-ml-1 flex items-center text-[#8a8a8a]"><Icon w={16} h={14}><path d="M12 1L2 12h12M7 7q4 1 4 5" /></Icon>:</span>
            <Pick label="旋转角度" value="0°" off className="h-[26px] w-[72px]" />
            <span className="flex items-center text-[#8a8a8a]"><Icon w={16} h={14} fill><path d="M6 1h8L8 13H0z" /></Icon>:</span>
            <Pick label="倾斜" value="0°" off className="-ml-2 h-[26px] w-[72px]" />
          </div>
          <IconButton label="约束比例" className="-mt-8 ml-2.5"><UnlinkIcon /></IconButton>
        </div>
        <div className="mx-1.5 mt-2 h-px bg-[#454545]" />
        <h3 className="mt-3 ml-3 leading-[22px]">矩形属性<Colon /></h3>
        <div className="mt-[5px] ml-5 grid grid-cols-[26px_79px_38px_73px_30px] items-center">
          <WidthIcon />
          <Field label="矩形宽度" value="83.007 m" className="w-[72px]" />
          <IconButton label="约束矩形比例" className={darkLink}><LinkIcon /></IconButton>
          <Field label="矩形高度" value="97.848 m" className="w-[72px]" />
          <span className="ml-1"><HeightIcon /></span>
        </div>
        <div className="mt-2 ml-[18px] flex items-center gap-1.5">
          <RotateIcon s={22} />
          <Pick label="矩形角度" value="0°" className="h-[26px] w-[71px]" arrow="border-l-2 border-[#5e5e5e]" />
        </div>
        <div className="mt-2.5 ml-[18px] grid grid-cols-[28px_79px_38px_79px_24px] items-center gap-y-3">
          <IconButton label="左上角"><CornerIcon turn="tl" /></IconButton>
          <Spin label="左上圆角" value="13 mm" className="w-[71px]" />
          <IconButton label="链接圆角半径" className={`row-span-2 ${darkLink}`}><LinkIcon /></IconButton>
          <Spin label="右上圆角" value="13 mm" className="w-[71px]" />
          <IconButton label="右上角"><CornerIcon turn="tr" /></IconButton>
          <IconButton label="左下角"><CornerIcon turn="bl" /></IconButton>
          <Spin label="左下圆角" value="13 mm" className="w-[71px]" />
          <Spin label="右下圆角" value="13 mm" className="w-[71px]" />
          <IconButton label="右下角"><CornerIcon turn="br" /></IconButton>
        </div>
        <div className="mx-1.5 mt-2 h-px bg-[#454545]" />
        <div className="mt-1 ml-1.5 flex flex-col text-[#e0e0e0]">
          {["缩放圆角", "缩放描边和效果"].map((t) => (
            <label key={t} className="flex h-[25px] items-center gap-1.5">
              <input type="checkbox" className="size-4 appearance-none rounded-[2px] border-2 border-[#c4c4c4] bg-[#4b4b4b]" />
              {t}
            </label>
          ))}
        </div>
      </div>
    </section>
  );
}

/* ---------- right panels ---------- */

function PanelHead({ title }: { title: string }) {
  return (
    <div className="flex h-[35px] shrink-0 items-center border-b-2 border-[#3a3a3a] bg-[#424242] text-[#e6e6e6]">
      <h2 className="-mb-0.5 flex h-[35px] w-[55px] items-center justify-center border-r-2 border-[#3a3a3a] bg-[#535353] text-[15px]">{title}</h2>
      <button aria-label={`${title}菜单`} className="mr-1.5 ml-auto text-[#8c8c8c]"><MenuIcon /></button>
    </div>
  );
}

const Right = () => <Icon w={7} h={12} className="text-white"><path d="M1 1l4 5-4 5" /></Icon>;

function AppearanceRow({ eye, chevron, children }: { eye?: string; chevron?: boolean; children: React.ReactNode }) {
  return (
    <div className="flex h-[31px] items-center border-b-2 border-[#5c5c5c] whitespace-nowrap text-[#e0e0e0]">
      <div className="flex h-full w-[30px] shrink-0 items-center justify-center border-r-2 border-[#424242]">
        <EyeIcon className={eye} />
      </div>
      <div className="flex w-8 shrink-0 items-center pl-2">{chevron && <Right />}</div>
      {children}
    </div>
  );
}

function RightPanels() {
  return (
    <aside className="flex w-[314px] shrink-0 flex-col border-r-2 border-[#3a3a3a] text-[15px] text-[#c4c4c4]">
      <div className="flex h-[15px] shrink-0 items-center justify-end border-b-2 border-[#383838] bg-[#424242] pr-2">
        <Icon w={8} h={7} sw={1.500}><path d="M1 1l2.500 2.500L1 6M4.500 1L7 3.500 4.500 6" /></Icon>
      </div>
      <PanelHead title="外观" />
      <div className="mx-1.5 mt-[7px] flex h-[578px] shrink-0 flex-col rounded-[3px] border-2 border-[#5c5c5c]">
        <div className="flex h-[31px] items-center border-b-2 border-[#5c5c5c] pl-0.5 font-bold text-[#e8e8e8]">
          <span className="mr-[35px] size-[25px] border-2 border-[#222] bg-[#fff000] shadow-[inset_0_0_0_1px_#fff]" />
          路径
        </div>
        <AppearanceRow chevron>
          <Dotted>描边<Colon /></Dotted>
          <span className="ml-2 border-2 border-[#222] bg-[#999] p-px">
            <Icon w={16} h={16} className="bg-white"><path d="M3 14L13 2" stroke="#d0103a" strokeWidth="3" /></Icon>
          </span>
        </AppearanceRow>
        <AppearanceRow chevron>
          <span className="shrink-0">填色<Colon /></span>
          <span className="ml-2 border-2 border-[#222] bg-[#999] p-px"><span className="block size-4 border border-white bg-[#fff000]" /></span>
        </AppearanceRow>
        <AppearanceRow eye="text-[#757575]">
          <Dotted>不透明度<Colon /></Dotted>默认值
        </AppearanceRow>
      </div>
      <div className="flex h-6 shrink-0 items-center pr-[34px] pl-3.5">
        <IconButton label="添加新描边"><Icon w={14} h={14} sw={3}><path d="M1.500 1.500h11v11h-11z" /></Icon></IconButton>
        <IconButton label="添加新填色" className="ml-5"><Icon w={14} h={14} sw={1.500}><path d="M1 1h12v12H1z" /><path d="M3 3h8v8H3z" fill="currentColor" stroke="none" /></Icon></IconButton>
        <button aria-label="添加新效果" className="ml-[18px] font-['Noto_Sans',sans-serif] text-base leading-4 italic">fx.</button>
        <div className="ml-auto flex items-center gap-[18px]">
          <IconButton label="清除外观"><Icon w={14} h={14}><circle cx="7" cy="7" r="5.500" /><path d="M3 3l8 8" /></Icon></IconButton>
          <IconButton label="复制所选项目" className="text-[#757575]"><PageIcon /></IconButton>
          <IconButton label="删除所选项目" className="text-[#757575]"><TrashIcon /></IconButton>
        </div>
      </div>
      <div className="h-[3px] shrink-0 border-y border-[#3a3a3a]" />
      <PanelHead title="图层" />
      <div className="mx-1.5 mt-1.5 flex min-h-0 flex-1 flex-col rounded-[3px] border-2 border-[#5c5c5c]">
        <div className="relative flex h-6 items-center bg-[#50677e] text-[#e6e6e6]">
          <div className="flex h-full w-[26px] items-center justify-center border-r-2 border-[#5c6c7c] text-[#c4c4c4]"><EyeIcon /></div>
          <span className="ml-7 h-full w-1 bg-[#4f80ff]" />
          <span className="ml-2.5"><Right /></span>
          <span className="ml-3.5 size-6 border-2 border-[#111] bg-[#fff000] shadow-[inset_1px_0_0_#fff,inset_-1px_0_0_#fff]" />
          <span className="ml-1.5">图层&nbsp; 1</span>
          <span className="ml-auto flex h-full w-[44px] items-center gap-1.5 border-l-2 border-[#5c6c7c] pl-1.5">
            <span className="size-[11px] rounded-full border-2 border-[#aaa]" />
            <span className="size-[9px] border border-[#1a1a1a] bg-[#4f80ff]" />
          </span>
          <svg className="absolute top-0 right-0" width="8" height="8" aria-hidden="true"><path d="M0 0h8v8z" fill="#c8c8c8" /></svg>
        </div>
      </div>
      <div className={`flex h-[27px] shrink-0 items-center pr-[34px] pl-2 text-[#e0c9a0] ${mono}`}>
        1...
        <div className="ml-auto flex items-center gap-4 text-[#c4c4c4]">
          <IconButton label="收集以导出"><Icon w={16} h={16}><path d="M8 3H1v12h12V9" /><path d="M9 8l6-6M10 1h5v5" /></Icon></IconButton>
          <IconButton label="定位对象"><Icon w={16} h={16}><circle cx="10" cy="6" r="4.500" /><path d="M7 9l-6 6" strokeWidth="2.500" /></Icon></IconButton>
          <IconButton label="建立剪切蒙版"><Icon w={16} h={16} sw={1.500}><path d="M1 1h10v10H1z" /><path d="M5 5h6v6H5z" fill="currentColor" stroke="none" /><path d="M11 5h4v10H5v-4" className="stroke-[#858585]" /></Icon></IconButton>
          <IconButton label="创建新子图层"><Icon w={18} h={14} fill><path d="M8 2h10v12h-5V8H8zM8 9h4v5zM0 0h2v4h2V2l4 3-4 3V6H0z" /></Icon></IconButton>
          <IconButton label="创建新图层"><PageIcon /></IconButton>
          <IconButton label="删除图层" className="text-[#757575]"><TrashIcon /></IconButton>
        </div>
      </div>
    </aside>
  );
}

export default function App() {
  return (
    <div className={`flex h-screen flex-col overflow-hidden bg-[#535353] ${SANS}`}>
      <MenuBar />
      <ControlBar />
      <div className="relative flex min-h-0 flex-1">
        <ToolBox />
        <Document />
        <span className="w-0.5 shrink-0 bg-[#3a3a3a]" />
        <Dock />
        <RightPanels />
        <TransformPanel />
      </div>
      <div className="flex h-1 shrink-0 border-t border-[#444] bg-[#2b2e34]">
        <span className="ml-[374px] w-[61px] bg-[#666]" />
      </div>
    </div>
  );
}
